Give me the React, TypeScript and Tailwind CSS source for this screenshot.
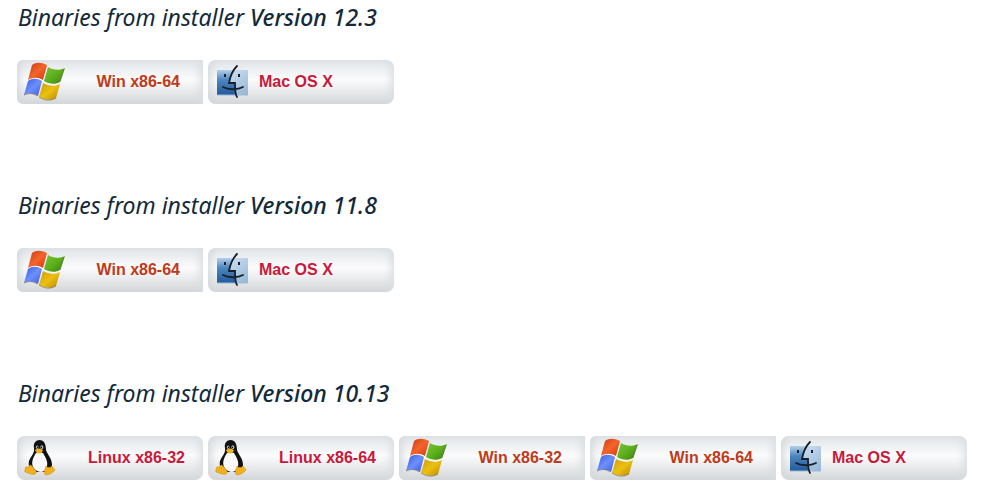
type Kind = 'win' | 'mac' | 'linux';

function WindowsIcon() {
  return (
    <svg viewBox="0 0 42 40" className="h-10 w-[42px]" aria-hidden="true">
      <defs>
        <linearGradient id="wr" x1="0" y1="0" x2="1" y2="1">
          <stop offset="0" stopColor="#c93a10" />
          <stop offset=".5" stopColor="#f4642c" />
          <stop offset="1" stopColor="#d8380c" />
        </linearGradient>
        <linearGradient id="wg" x1="0" y1="0" x2="1" y2="1">
          <stop offset="0" stopColor="#7cc038" />
          <stop offset=".5" stopColor="#5cb01c" />
          <stop offset="1" stopColor="#388010" />
        </linearGradient>
        <linearGradient id="wb" x1="0" y1="0" x2="1" y2="1">
          <stop offset="0" stopColor="#3458d8" />
          <stop offset=".5" stopColor="#6c90ff" />
          <stop offset="1" stopColor="#3e58dc" />
        </linearGradient>
        <linearGradient id="wy" x1="0" y1="0" x2="1" y2="1">
          <stop offset="0" stopColor="#c89c10" />
          <stop offset=".5" stopColor="#ecc010" />
          <stop offset="1" stopColor="#b88400" />
        </linearGradient>
      </defs>
      <path d="M8 3C12 0 17 0 23 3L19 18C14 15 9 15 4 18Z" fill="url(#wr)" />
      <path d="M24 5C29 8 35 9 41 6L36 20C31 23 25 22 20 19Z" fill="url(#wg)" />
      <path d="M4 19C8 16 13 16 18 19L14 34C9 31 5 31 0 33Z" fill="url(#wb)" />
      <path d="M19 21C25 24 30 25 36 22L32 36C27 39 21 38 15 35Z" fill="url(#wy)" />
      <path d="M15 35C21 39 27 39 32 36M0 33C5 31 9 31 13 34M36 20L40 7" fill="none" stroke="#665d46" strokeWidth="1" opacity=".55" />
    </svg>
  );
}

function MacIcon() {
  return (
    <svg viewBox="0 0 34 36" className="h-9 w-[34px]" aria-hidden="true">
      <defs>
        <linearGradient id="ml" x1="0" y1="0" x2="0" y2="1">
          <stop offset="0" stopColor="#b4d0ea" />
          <stop offset=".4" stopColor="#4c85bf" />
          <stop offset="1" stopColor="#225a9b" />
        </linearGradient>
        <linearGradient id="mr" x1="0" y1="0" x2="1" y2="1">
          <stop offset="0" stopColor="#dce9f5" />
          <stop offset="1" stopColor="#93b6d8" />
        </linearGradient>
      </defs>
      <rect x="1" y="6" width="31" height="25" rx="1" fill="url(#mr)" />
      <path d="M1 6H18Q14 14 13 20H19L20 31H1Z" fill="url(#ml)" />
      <path d="M1 31H32" stroke="#9db9d3" strokeWidth="1" />
      <path d="M21 2C16 7 14 13 13 19H19C19 25 19 30 21 33M7 23C12 26 22 26 27 23" fill="none" stroke="#18202a" strokeWidth="1.8" strokeLinecap="round" />
      <path d="M9 10V13M23 10V13" stroke="#18202a" strokeWidth="2" />
    </svg>
  );
}

function LinuxIcon() {
  return (
    <svg viewBox="0 0 32 36" className="h-9 w-8" aria-hidden="true">
      <path d="M10 8C9 3 12 0 15.5 0C20 0 22 4 22 10C23 14 28 18 28 25C28 29 25 31 21 32H9C6 29 4 26 5 21C7 16 11 13 10 8Z" fill="#111" />
      <path d="M12 13C9 18 7 22 9 27C11 32 19 34 22 29C25 23 22 18 19 13C17 12 14 12 12 13Z" fill="#fafafa" />
      <ellipse cx="13.2" cy="7.2" rx="1.3" ry="1.8" fill="#bbb" />
      <ellipse cx="17.8" cy="7.2" rx="1.5" ry="1.9" fill="#bbb" />
      <circle cx="13.6" cy="7.4" r=".8" fill="#111" />
      <circle cx="17.4" cy="7.4" r=".8" fill="#111" />
      <path d="M11 10Q15 7 19 10L18 12Q15 15 12 12Z" fill="#efb21b" />
      <path d="M6 25C8 25 10 29 12 31C13 34 10 35 7 34L1 32C0 31 2 29 1 28C2 26 5 28 6 25Z" fill="#efb21b" stroke="#d0911a" strokeWidth=".6" />
      <path d="M22 26C24 28 26 28 28 26C29 28 31 29 31 30C29 32 26 35 22 35C19 34 21 30 22 26Z" fill="#efb21b" stroke="#d0911a" strokeWidth=".6" />
    </svg>
  );
}

const shapes: Record<Kind, string> = {
  win: 'rounded-l-md pl-[7px] pr-[23px] justify-between text-[#c03a17]',
  mac: 'rounded-lg pl-2 gap-[9px] text-[#c8193a]',
  linux: 'rounded-lg pl-[7px] pr-[18px] justify-between text-[#c8193a]',
};

function Download({ kind, label }: { kind: Kind; label: string }) {
  return (
    <a
      href="#"
      className={`flex h-11 w-[186px] items-center whitespace-nowrap bg-linear-to-b from-[#dfe4e7] via-[#fcfcfd] via-45% to-[#d3d6d8] font-['Liberation_Sans',sans-serif] text-base font-bold shadow-[inset_8px_0_8px_-5px_#d4d9dc,inset_-8px_0_8px_-5px_#d9dee1] ${shapes[kind]}`}
    >
      {kind === 'win' && <WindowsIcon />}
      {kind === 'mac' && <MacIcon />}
      {kind === 'linux' && <LinuxIcon />}
      <span>{label}</span>
    </a>
  );
}

const win64 = { kind: 'win' as Kind, label: 'Win x86-64' };
const mac = { kind: 'mac' as Kind, label: 'Mac OS X' };

const releases: { version: string; files: { kind: Kind; label: string }[] }[] = [
  { version: '12.3', files: [win64, mac] },
  { version: '11.8', files: [win64, mac] },
  {
    version: '10.13',
    files: [
      { kind: 'linux', label: 'Linux x86-32' },
      { kind: 'linux', label: 'Linux x86-64' },
      { kind: 'win', label: 'Win x86-32' },
      win64,
      mac,
    ],
  },
];

export default function App() {
  return (
    <main className="flex flex-col gap-[84px] bg-white px-[17px]">
      {releases.map((release) => (
        <section key={release.version} className="flex flex-col gap-[26px]">
          <h2 className="pl-px font-['Noto_Sans',sans-serif] text-[23px] leading-[34px] font-normal text-[#12293b] italic">
            Binaries from installer <strong className="font-medium">Version {release.version}</strong>
          </h2>
          <div className="flex flex-wrap gap-[5px]">
            {release.files.map((file) => (
              <Download key={file.label} kind={file.kind} label={file.label} />
            ))}
          </div>
        </section>
      ))}
    </main>
  );
}
